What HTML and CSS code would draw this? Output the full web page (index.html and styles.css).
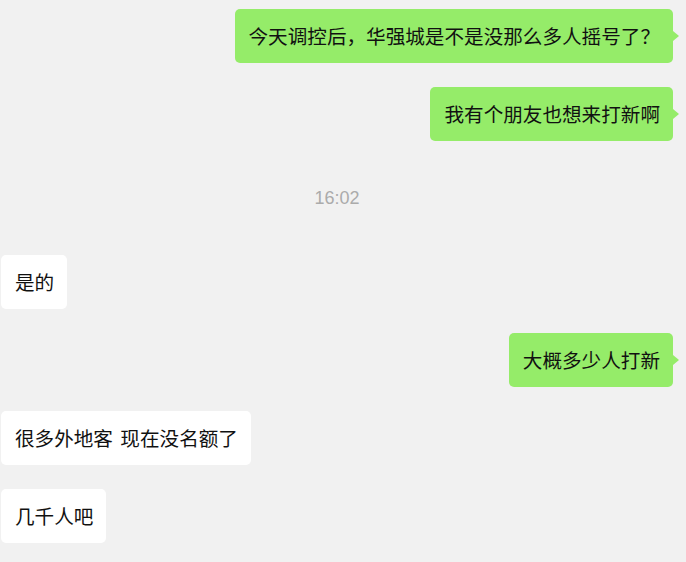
FILE: index.html
```html
<!DOCTYPE html>
<html lang="zh-CN">
<head>
    <meta charset="UTF-8">
    <meta name="viewport" content="width=device-width, initial-scale=1.0">
    <title>聊天记录</title>
    <link rel="stylesheet" href="styles.css">
</head>
<body>
    <div class="chat">
        <div class="row mine"><div class="bubble">今天调控后，华强城是不是没那么多人摇号了？</div></div>
        <div class="row mine"><div class="bubble">我有个朋友也想来打新啊</div></div>
        <div class="time">16:02</div>
        <div class="row theirs"><div class="bubble">是的</div></div>
        <div class="row mine"><div class="bubble">大概多少人打新</div></div>
        <div class="row theirs"><div class="bubble">很多外地客&nbsp;现在没名额了</div></div>
        <div class="row theirs"><div class="bubble">几千人吧</div></div>
    </div>
</body>
</html>
```

FILE: styles.css
```css
body {
    margin: 0;
    background-color: #f1f1f1;
    font-family: "Noto Sans CJK SC", "Noto Sans", sans-serif;
    color: #111;
}
.chat {
    display: flex;
    flex-direction: column;
    gap: 24px;
    padding: 9px 13px 0 1px;
}
.row {
    display: flex;
}
.mine {
    justify-content: flex-end;
}
.theirs {
    justify-content: flex-start;
}
.bubble {
    position: relative;
    font-size: 19.6px;
    line-height: 26px;
    padding: 14px 13px 14px 14px;
    border-radius: 5px;
    background-color: #fff;
    white-space: nowrap;
    word-spacing: 3px;
}
.mine .bubble {
    background-color: #95ec69;
}
.mine .bubble::after {
    content: "";
    position: absolute;
    right: -6px;
    top: 22px;
    border-top: 5px solid transparent;
    border-bottom: 5px solid transparent;
    border-left: 6px solid #95ec69;
}
.time {
    height: 66px;
    display: flex;
    align-items: center;
    justify-content: center;
    font-family: "Liberation Sans", Arial, sans-serif;
    font-size: 18px;
    color: #ababab;
}
```
